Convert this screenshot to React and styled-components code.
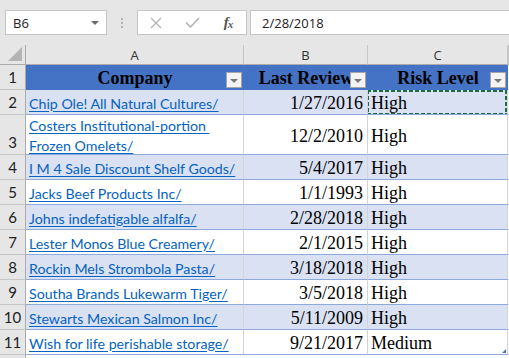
import React from "react";
import styled, { createGlobalStyle } from "styled-components";

const GlobalStyle = createGlobalStyle`
  html, body {
    margin: 0;
    padding: 0;
    background: #ffffff;
  }
  * {
    box-sizing: border-box;
  }
`;

const COLS = "26px 218px 124px 140px 1fr";

const Window = styled.div`
  width: 509px;
  height: 358px;
  overflow: hidden;
  background: #e6e6e6;
  display: flex;
  flex-direction: column;
`;

const FormulaBar = styled.div`
  flex: none;
  height: 45px;
  display: flex;
  align-items: flex-start;
  padding: 10px 0 0 5px;
  font-family: "Open Sans", "Liberation Sans", sans-serif;
  font-size: 13px;
  color: #222;
`;

const NameBox = styled.div`
  width: 102px;
  height: 25px;
  background: #fff;
  border: 1px solid #c6c6c6;
  display: flex;
  align-items: center;
  justify-content: space-between;
  padding: 0 7px 0 7px;
`;

const DropArrow = styled.span`
  width: 0;
  height: 0;
  border-left: 4px solid transparent;
  border-right: 4px solid transparent;
  border-top: 4px solid #6a6a6a;
`;

const Grip = styled.div`
  width: 30px;
  height: 25px;
  display: flex;
  flex-direction: column;
  align-items: center;
  justify-content: center;
  gap: 2px;
`;

const Dot = styled.span`
  width: 2px;
  height: 2px;
  background: #b4b4b4;
`;

const ButtonBox = styled.div`
  width: 110px;
  height: 25px;
  background: #fff;
  border: 1px solid #c6c6c6;
  display: flex;
`;

const BarButton = styled.div`
  width: 36px;
  height: 100%;
  display: flex;
  align-items: center;
  justify-content: center;
`;

const Fx = styled.span`
  font-family: "Liberation Serif", serif;
  font-style: italic;
  font-weight: bold;
  font-size: 15px;
  color: #555;
  letter-spacing: -1px;

  small {
    font-size: 11px;
    position: relative;
    top: 1px;
  }
`;

const FormulaInput = styled.div`
  flex: 1;
  height: 25px;
  margin-left: 3px;
  background: #fff;
  border: 1px solid #c6c6c6;
  border-right: none;
  display: flex;
  align-items: center;
  padding-left: 11px;
`;

const Grid = styled.div`
  flex: 1;
  display: flex;
  flex-direction: column;
  background: #fff;
`;

const HeaderStrip = styled.div`
  display: grid;
  grid-template-columns: ${COLS};
  height: 20px;
  background: #e6e6e6;
  font-family: "Open Sans", "Liberation Sans", sans-serif;
  font-size: 13px;
  color: #333;
`;

const ColLetter = styled.div`
  display: flex;
  align-items: center;
  justify-content: center;
  border-right: 1px solid #c6c6c6;
  border-bottom: 1px solid #ababab;
  padding-top: 1px;
`;

const Corner = styled.div`
  position: relative;
  border-right: 1px solid #ababab;
  border-bottom: 1px solid #ababab;

  &::after {
    content: "";
    position: absolute;
    right: 3px;
    bottom: 3px;
    width: 0;
    height: 0;
    border-left: 14px solid transparent;
    border-bottom: 14px solid #b4b4b4;
  }
`;

const Row = styled.div`
  display: grid;
  grid-template-columns: ${COLS};
  height: ${(p) => p.h || 25}px;
  flex: none;
`;

const RowNum = styled.div`
  background: #e6e6e6;
  border-right: 1px solid #ababab;
  border-bottom: 1px solid #c6c6c6;
  display: flex;
  align-items: flex-end;
  justify-content: center;
  padding-bottom: 4px;
  font-family: "Lato", "Liberation Sans", sans-serif;
  font-size: 15px;
  line-height: 1;
  color: #222;
`;

const Cell = styled.div`
  position: relative;
  display: flex;
  align-items: center;
  justify-content: ${(p) =>
    p.align === "right" ? "flex-end" : p.align === "center" ? "center" : "flex-start"};
  padding: 3px ${(p) => (p.align === "right" ? "4px" : "2px")} 0 3px;
  background: ${(p) => (p.head ? "#4472c4" : p.band ? "#d9e1f2" : "#fff")};
  border-bottom: 1px solid ${(p) => (p.head ? "#4472c4" : "#8ea9db")};
  border-right: 1px solid ${(p) => (p.head ? "#4472c4" : "#d4d4d4")};
  overflow: hidden;
  white-space: nowrap;
  font-family: "Liberation Serif", "Times New Roman", serif;
  font-size: 18px;
  font-weight: ${(p) => (p.head ? "bold" : "normal")};
  color: #000;
`;

const Blank = styled.div`
  background: #fff;
  border-bottom: 1px solid #d4d4d4;
`;

const CompanyLink = styled.span`
  display: flex;
  flex-direction: column;
  align-items: flex-start;
  font-family: "Lato", "Liberation Sans", sans-serif;
  font-size: 14.2px;
  line-height: 20px;
  color: #0563c1;
  white-space: pre;

  span {
    text-decoration: underline;
    text-underline-offset: 2px;
  }
`;

const FilterButton = styled.span`
  position: absolute;
  right: 1px;
  top: 7px;
  width: 16px;
  height: 16px;
  background: #f4f4f4;
  border: 1px solid #a6a6a6;
  display: flex;
  align-items: center;
  justify-content: center;

  &::after {
    content: "";
    margin-top: 2px;
    border-left: 4px solid transparent;
    border-right: 4px solid transparent;
    border-top: 4px solid #7a7a7a;
  }
`;

const Marquee = styled.span`
  position: absolute;
  left: -1px;
  top: 0;
  right: 0;
  bottom: -1px;
  pointer-events: none;
  background:
    repeating-linear-gradient(90deg, #1d6b40 0 4px, transparent 4px 6px) top / 100% 2px no-repeat,
    repeating-linear-gradient(90deg, #1d6b40 0 4px, transparent 4px 6px) bottom / 100% 2px no-repeat,
    repeating-linear-gradient(180deg, #1d6b40 0 4px, transparent 4px 6px) left / 2px 100% no-repeat,
    repeating-linear-gradient(180deg, #1d6b40 0 4px, transparent 4px 6px) right / 2px 100% no-repeat;
`;

const ResizeHandle = styled.span`
  position: absolute;
  right: 1px;
  bottom: 1px;
  width: 0;
  height: 0;
  border-left: 4px solid transparent;
  border-bottom: 4px solid #4472c4;
`;

const rows = [
  { n: 2, company: ["Chip Ole! All Natural Cultures/"], date: "1/27/2016", risk: "High", selected: true },
  { n: 3, company: ["Costers Institutional-portion ", "Frozen Omelets/"], date: "12/2/2010", risk: "High", h: 40 },
  { n: 4, company: ["I M 4 Sale Discount Shelf Goods/"], date: "5/4/2017", risk: "High" },
  { n: 5, company: ["Jacks Beef Products Inc/"], date: "1/1/1993", risk: "High" },
  { n: 6, company: ["Johns indefatigable alfalfa/"], date: "2/28/2018", risk: "High" },
  { n: 7, company: ["Lester Monos Blue Creamery/"], date: "2/1/2015", risk: "High" },
  { n: 8, company: ["Rockin Mels Strombola Pasta/"], date: "3/18/2018", risk: "High" },
  { n: 9, company: ["Southa Brands Lukewarm Tiger/"], date: "3/5/2018", risk: "High" },
  { n: 10, company: ["Stewarts Mexican Salmon Inc/"], date: "5/11/2009", risk: "High" },
  { n: 11, company: ["Wish for life perishable storage/"], date: "9/21/2017", risk: "Medium", last: true },
];

const CloseIcon = () => (
  <svg width="12" height="12" viewBox="0 0 12 12">
    <path d="M1 1 L11 11 M11 1 L1 11" stroke="#b3b3b3" strokeWidth="1.3" fill="none" />
  </svg>
);

const CheckIcon = () => (
  <svg width="15" height="11" viewBox="0 0 15 11">
    <path d="M1 5.5 L5.5 10 L14 1" stroke="#b3b3b3" strokeWidth="1.6" fill="none" />
  </svg>
);

const App = () => {
  return (
    <>
      <GlobalStyle />
      <Window>
        <FormulaBar>
          <NameBox>
            <span>B6</span>
            <DropArrow />
          </NameBox>
          <Grip>
            <Dot />
            <Dot />
            <Dot />
          </Grip>
          <ButtonBox>
            <BarButton>
              <CloseIcon />
            </BarButton>
            <BarButton>
              <CheckIcon />
            </BarButton>
            <BarButton>
              <Fx>
                f<small>x</small>
              </Fx>
            </BarButton>
          </ButtonBox>
          <FormulaInput>2/28/2018</FormulaInput>
        </FormulaBar>

        <Grid>
          <HeaderStrip>
            <Corner />
            <ColLetter>A</ColLetter>
            <ColLetter>B</ColLetter>
            <ColLetter>C</ColLetter>
            <ColLetter />
          </HeaderStrip>

          <Row>
            <RowNum>1</RowNum>
            <Cell head align="center">
              Company
              <FilterButton />
            </Cell>
            <Cell head align="center">
              Last Review
              <FilterButton />
            </Cell>
            <Cell head align="center">
              Risk Level
              <FilterButton />
            </Cell>
            <Blank />
          </Row>

          {rows.map((r) => {
            const band = r.n % 2 === 0;
            return (
              <Row key={r.n} h={r.h}>
                <RowNum>{r.n}</RowNum>
                <Cell band={band}>
                  <CompanyLink>
                    {r.company.map((line) => (
                      <span key={line}>{line}</span>
                    ))}
                  </CompanyLink>
                </Cell>
                <Cell band={band} align="right">
                  {r.date}
                </Cell>
                <Cell band={band}>
                  {r.risk}
                  {r.selected && <Marquee />}
                  {r.last && <ResizeHandle />}
                </Cell>
                <Blank />
              </Row>
            );
          })}

          <Row>
            <RowNum />
            <Blank />
            <Blank />
            <Blank />
            <Blank />
          </Row>
        </Grid>
      </Window>
    </>
  );
};

export default App;
